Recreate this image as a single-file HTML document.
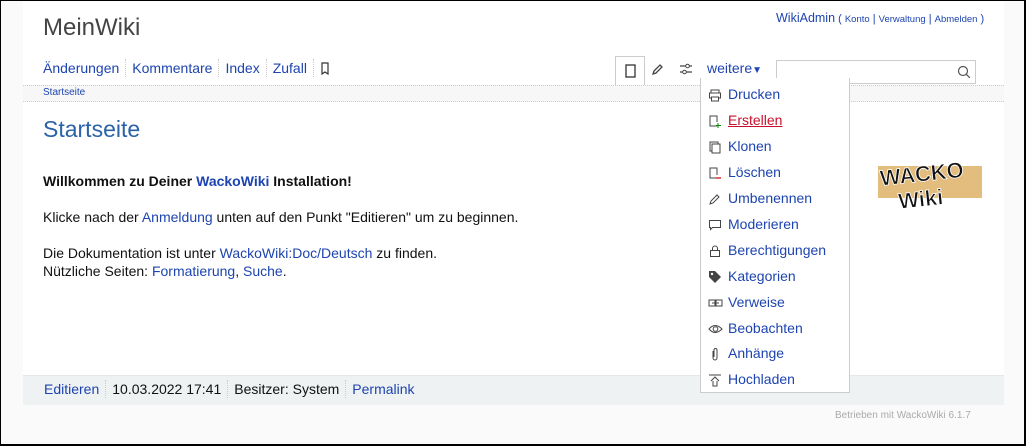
<!DOCTYPE html>
<html><head><meta charset="utf-8"><style>
*{margin:0;padding:0;box-sizing:border-box}
body{width:1026px;height:446px;overflow:hidden;background:#fafafa;font-family:"Liberation Sans",sans-serif;font-size:14px;color:#111;position:relative}
.frame{position:absolute;left:0;top:0;width:1026px;height:446px;border:1px solid #000;border-width:1px 2px 2px 1px;pointer-events:none;z-index:10}
.main{position:absolute;left:23px;top:0;width:981px;height:405px;background:#fff}
a{color:#1d44b0;text-decoration:none}
.abs{position:absolute;white-space:nowrap}
.nav span{display:inline-block;padding:0 6px;border-right:1px dotted #ccc;line-height:18px}
.crumb{position:absolute;left:23px;top:85px;width:981px;height:17px;background:#f7f7f7;border-top:1px dotted #ccc;border-bottom:1px dotted #ccc}
.foot{position:absolute;left:23px;top:375px;width:981px;height:30px;background:#eff2f3;border-top:1px solid #e4e8ea}
.dd{position:absolute;left:700px;top:78px;width:150px;height:315px;background:#fff;border:1px solid #ccc;border-top:none;z-index:5}
.dd div{position:absolute;left:27px;color:#1d44b0;font-size:14px}
.dd svg{position:absolute;left:-20px;top:2px}
</style></head><body>
<div class="main"></div>
<div class="abs" style="left:43px;top:14px;font-size:24px;color:#444">MeinWiki</div>
<div class="abs" style="left:776px;top:11px;font-size:11px;color:#1d44b0"><span style="font-size:12.5px">WikiAdmin</span> ( <span style="font-size:9.5px">Konto</span> | <span style="font-size:9.5px">Verwaltung</span> | <span style="font-size:9.5px">Abmelden</span> )</div>
<div class="abs nav" style="left:37px;top:59px;color:#1d44b0"><span>Änderungen</span><span>Kommentare</span><span>Index</span><span>Zufall</span><span style="border:none"><svg width="10" height="13" viewBox="0 0 10 13" style="vertical-align:-2px"><path d="M2 1h6v11l-3-2-3 2z" fill="none" stroke="#333" stroke-width="1.2"/></svg></span></div>
<div class="abs" style="left:615px;top:56px;width:30px;height:29px;border:1px solid #ccc;border-bottom:none;background:#fff"><svg width="30" height="28"><rect x="10" y="8" width="9" height="12" fill="none" stroke="#333" stroke-width="1.3"/></svg></div>
<svg class="abs" style="left:650px;top:61px" width="16" height="16"><path d="M3 13l1-3 6-6 2 2-6 6z" fill="none" stroke="#444" stroke-width="1.3"/></svg>
<svg class="abs" style="left:678px;top:61px" width="16" height="16"><path d="M2 5h6M11 5h3M2 11h3M8 11h6" stroke="#444" stroke-width="1.3"/><circle cx="9.5" cy="5" r="1.8" fill="none" stroke="#444"/><circle cx="6.5" cy="11" r="1.8" fill="none" stroke="#444"/></svg>
<div class="abs" style="left:707px;top:60px;color:#1d44b0;font-size:14px">weitere<span style="font-size:10px">▼</span></div>
<div class="abs" style="left:776px;top:60px;width:200px;height:24px;border:1px solid #ccc;background:#fff"><svg style="position:absolute;right:4px;top:4px" width="14" height="14"><circle cx="6" cy="6" r="4.5" fill="none" stroke="#555" stroke-width="1.2"/><path d="M9.3 9.3l3.5 3.5" stroke="#555" stroke-width="1.3"/></svg></div>
<div class="crumb"></div>
<div class="abs" style="left:43px;top:87px;font-size:10px;color:#1d44b0">Startseite</div>
<div class="abs" style="left:43px;top:116px;font-size:23px;color:#2b62a8">Startseite</div>
<div class="abs" style="left:43px;top:173px;font-weight:bold">Willkommen zu Deiner <a>WackoWiki</a> Installation!</div>
<div class="abs" style="left:43px;top:209px">Klicke nach der <a>Anmeldung</a> unten auf den Punkt "Editieren" um zu beginnen.</div>
<div class="abs" style="left:43px;top:245px">Die Dokumentation ist unter <a>WackoWiki:Doc/Deutsch</a> zu finden.</div>
<div class="abs" style="left:43px;top:263px">Nützliche Seiten: <a>Formatierung</a>, <a>Suche</a>.</div>
<svg class="abs" style="left:876px;top:152px" width="108" height="58"><rect x="2" y="14" width="104" height="32" fill="#e2bd7d"/><text x="4" y="30" font-family="Liberation Sans" font-weight="bold" font-size="22" fill="#111" stroke="#fff" stroke-width="0.8" transform="rotate(-6 40 25)" textLength="84">WACKO</text><text x="22" y="54" font-family="Liberation Sans" font-weight="bold" font-size="22" fill="#111" stroke="#fff" stroke-width="0.8" transform="rotate(-6 50 45)">Wiki</text></svg>
<div class="foot"></div>
<div class="abs nav" style="left:38px;top:380px"><span style="color:#1d44b0">Editieren</span><span>10.03.2022 17:41</span><span>Besitzer: System</span><span style="border:none;color:#1d44b0">Permalink</span></div>
<div class="abs" style="left:835px;top:410px;font-size:10px;color:#aaa">Betrieben mit WackoWiki 6.1.7</div>
<div class="dd">
<div style="top:8px"><svg width="14" height="14"><rect x="3" y="2" width="8" height="3" fill="none" stroke="#444"/><rect x="1.5" y="5" width="11" height="5" fill="none" stroke="#444"/><rect x="3.5" y="9" width="7" height="4" fill="#fff" stroke="#444"/></svg>Drucken</div>
<div style="top:34px;color:#c8102e;text-decoration:underline"><svg width="14" height="14"><path d="M9 12H2V2h7v6" fill="none" stroke="#444"/><path d="M10 9v5M8 11.5h5" stroke="#080" stroke-width="1"/></svg> Erstellen</div>
<div style="top:60px"><svg width="14" height="14"><rect x="2" y="2" width="8" height="9" fill="none" stroke="#444"/><rect x="4" y="4" width="8" height="9" fill="#fff" stroke="#444"/></svg>Klonen</div>
<div style="top:86px"><svg width="14" height="14"><path d="M9 12H2V2h7v7" fill="none" stroke="#444"/><path d="M8 12h5" stroke="#c00" stroke-width="1.2"/></svg>Löschen</div>
<div style="top:112px"><svg width="14" height="14"><path d="M2 12l1-3 6-6 2 2-6 6z" fill="none" stroke="#444"/></svg>Umbenennen</div>
<div style="top:138px"><svg width="14" height="14"><path d="M1.5 2.5h11v7h-8l-2 2v-2h-1z" fill="none" stroke="#444"/></svg>Moderieren</div>
<div style="top:164px"><svg width="14" height="14"><rect x="2.5" y="6.5" width="9" height="6" fill="none" stroke="#444"/><path d="M4.5 6.5V4.5a2.5 2.5 0 015 0v2" fill="none" stroke="#444"/></svg>Berechtigungen</div>
<div style="top:190px"><svg width="14" height="14"><path d="M1 1h6l6 6-6 6-6-6z" fill="#444"/><circle cx="4" cy="4" r="1.2" fill="#fff"/></svg>Kategorien</div>
<div style="top:216px"><svg width="16" height="14"><rect x="1" y="4" width="6" height="6" fill="none" stroke="#444"/><rect x="8" y="4" width="6" height="6" fill="none" stroke="#444"/><path d="M4 7h7" stroke="#444"/></svg>Verweise</div>
<div style="top:242px"><svg width="16" height="14"><path d="M1 7q6-7 13 0q-7 7-13 0z" fill="none" stroke="#444"/><circle cx="7.5" cy="7" r="2.3" fill="none" stroke="#444"/></svg>Beobachten</div>
<div style="top:267px"><svg width="14" height="14"><path d="M5 4v7a2 2 0 004 0V3a1.5 1.5 0 00-3 0v7" fill="none" stroke="#444"/></svg>Anhänge</div>
<div style="top:293px"><svg width="14" height="14"><path d="M1 2h12M3 8l4-4 4 4M5 8v5h4V8" fill="none" stroke="#444"/></svg>Hochladen</div>
</div>
<div class="frame"></div>
</body></html>
